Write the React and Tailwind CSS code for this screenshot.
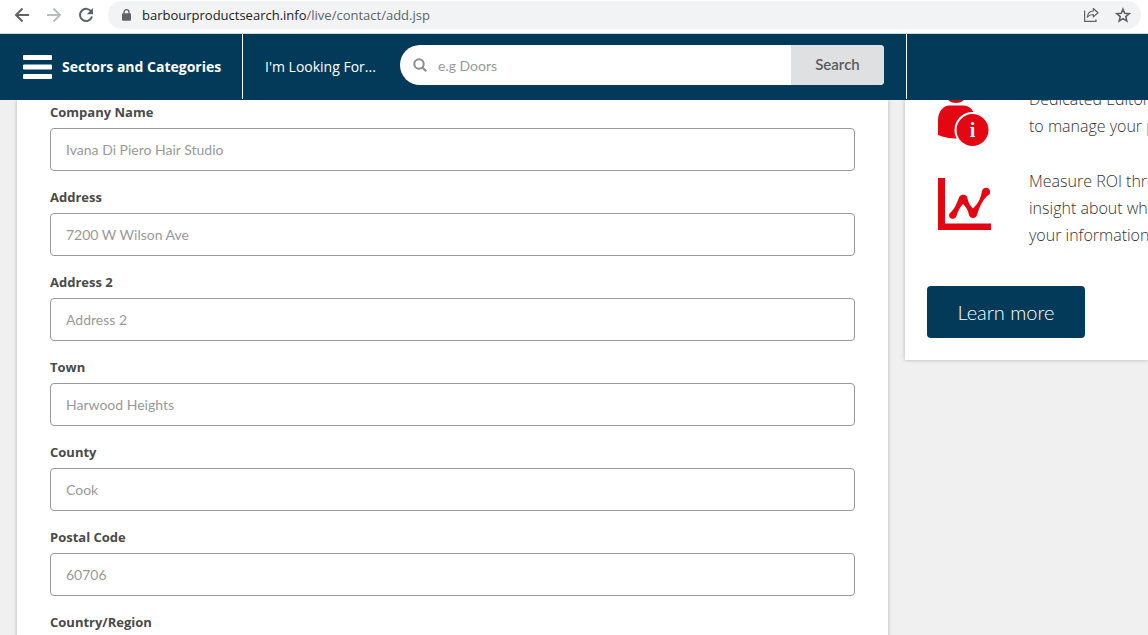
import { useState } from 'react';

const FIELDS = [
  { id: 'company', label: 'Company Name', placeholder: 'Ivana Di Piero Hair Studio' },
  { id: 'address', label: 'Address', placeholder: '7200 W Wilson Ave' },
  { id: 'address2', label: 'Address 2', placeholder: 'Address 2' },
  { id: 'town', label: 'Town', placeholder: 'Harwood Heights' },
  { id: 'county', label: 'County', placeholder: 'Cook' },
  { id: 'postcode', label: 'Postal Code', placeholder: '60706' },
  { id: 'country', label: 'Country/Region', placeholder: '' },
];

function BrowserBar() {
  return (
    <div className="flex h-[34px] items-start border-b border-[#c9dde3] bg-white pl-[14px] pr-[7px] pt-px">
      <div className="flex h-7 items-center gap-4 pr-[14px]">
        <button type="button" aria-label="Back">
          <svg width="16" height="16" viewBox="0 0 16 16" fill="none" stroke="#5f6368" strokeWidth="2">
            <path d="M15 8H2.5M8.5 1.5 2 8l6.5 6.5" />
          </svg>
        </button>
        <button type="button" aria-label="Forward">
          <svg width="16" height="16" viewBox="0 0 16 16" fill="none" stroke="#babcbe" strokeWidth="2">
            <path d="M1 8h12.5M7.5 1.5 14 8l-6.5 6.5" />
          </svg>
        </button>
        <button type="button" aria-label="Reload">
          <svg width="16" height="16" viewBox="0 0 16 16">
            <path d="M13.3 4.7A6.1 6.1 0 1 0 14 9.6" fill="none" stroke="#5f6368" strokeWidth="2" />
            <path d="M15 1v6.2H8.8z" fill="#5f6368" />
          </svg>
        </button>
      </div>
      <div className="flex h-7 flex-1 items-center rounded-full bg-[#f1f3f4] pl-[14px] pr-[10px]">
        <svg width="9" height="12" viewBox="0 0 9 12">
          <path d="M2 5V3.2a2.5 2.5 0 0 1 5 0V5" fill="none" stroke="#5f6368" strokeWidth="1.3" />
          <rect x="0" y="4.2" width="9" height="7.5" rx="1" fill="#5f6368" />
        </svg>
        <p className="flex-1 pl-[11px] font-['Open_Sans',sans-serif] text-[13px] leading-5 text-[#5f6368]">
          <span className="text-[#202124]">barbourproductsearch.info</span>/live/contact/add.jsp
        </p>
        <div className="flex items-center gap-4">
          <button type="button" aria-label="Share">
            <svg width="16" height="16" viewBox="0 0 16 16" fill="none" stroke="#5f6368" strokeWidth="1.2">
              <path d="M1.6 3.5v10.9h11.4v-2" />
              <path d="M10.300 1.500 15 5.700l-4.700 4.200V7.500C7.700 7.400 5.900 8.200 4.300 10.200 4.600 6.500 6.700 4.200 10.300 4z" strokeLinejoin="round" />
            </svg>
          </button>
          <button type="button" aria-label="Bookmark">
            <svg width="16" height="16" viewBox="0 0 16 16" fill="none" stroke="#5f6368" strokeWidth="1.6">
              <path d="m8 2.200 1.700 4.100 4.500.4-3.400 2.900 1 4.400L8 11.600l-3.800 2.400 1-4.400-3.400-2.900 4.500-.4z" />
            </svg>
          </button>
        </div>
      </div>
    </div>
  );
}

function SiteHeader() {
  return (
    <header className="relative z-10 flex h-[66px] bg-[#033a59] pb-px font-['Open_Sans',sans-serif] text-white">
      <button type="button" className="flex w-[243px] shrink-0 items-center gap-[10px] border-r border-white pl-[23px] text-[14px] font-bold">
        <svg width="29" height="24" viewBox="0 0 29 24" fill="currentColor">
          <rect width="29" height="5" rx="1" />
          <rect y="9.500" width="29" height="5" rx="1" />
          <rect y="19" width="29" height="5" rx="1" />
        </svg>
        Sectors and Categories
      </button>
      <form className="flex flex-1 items-start pl-[22px] pr-[22px] pt-[11px]" onSubmit={(e) => e.preventDefault()}>
        <label htmlFor="search" className="w-[135px] shrink-0 text-[14px] leading-[44px]">I'm Looking For...</label>
        <div className="flex h-10 flex-1 items-center overflow-hidden rounded-l-[20px] rounded-r-[4px] bg-white pl-[13px] font-['Lato',sans-serif]">
          <svg width="14" height="14" viewBox="0 0 14 14" fill="none" stroke="#8c8c8c" strokeWidth="2">
            <circle cx="6" cy="6" r="4.700" />
            <path d="m9.300 9.300 4 4" />
          </svg>
          <input id="search" type="text" placeholder="e.g Doors" className="h-10 min-w-0 flex-1 bg-transparent pl-[11px] text-[14px] text-[#444] placeholder:text-[#999] focus:outline-none" />
          <button type="submit" className="h-10 w-[93px] bg-[#dfe0e2] pb-[2px] text-[15px] font-semibold text-[#5b5b5b]">Search</button>
        </div>
      </form>
      <div className="w-[242px] shrink-0 border-l border-white" />
    </header>
  );
}

function EditorIcon() {
  return (
    <svg width="54" height="66" viewBox="0 0 54 66" className="shrink-0">
      <circle cx="18" cy="9" r="12" fill="#c4131f" />
      <path d="M0 38c0-9 6-14.500 11-14.500h14c7 0 12 6 13 14.500v17.500C25 58 10 57 0 53z" fill="#e30613" />
      <circle cx="34.500" cy="48" r="18" fill="#fff" />
      <circle cx="34.500" cy="48" r="16" fill="#e30613" />
      <text x="34.500" y="55" textAnchor="middle" fill="#fff" fontSize="20" fontWeight="700" fontFamily="Liberation Serif, serif">i</text>
    </svg>
  );
}

function ChartIcon() {
  return (
    <svg width="54" height="54" viewBox="0 0 54 54" className="shrink-0" fill="#e30613">
      <path d="M0 0h7v45.500h46V52H0z" />
      <path d="M11.500 35.500C16 32 18 27 21.500 18.500c1.500-2.500 6-2.500 7.500 0C30 24 32 28 35 30.500 40 26 43 20 44 13c1-4 7-4.500 8 0 .5 3-1 4-3 5-5 5-8 12-10 19-1 4-7 4-8 0-1-5-3-8-6-11-3 3-5 7-6.500 12-2 5-9 3-7-2.500z" />
    </svg>
  );
}

function Sidebar() {
  return (
    <aside className="-mt-8 w-[243px] shrink-0 self-start overflow-hidden bg-white pb-[22px] pl-[22px] pt-[14px] shadow-[0_0_4px_rgba(0,0,0,0.25)]">
      <ul className="whitespace-nowrap pl-[11px] font-['Open_Sans',sans-serif] text-[16px] font-light leading-[27px] text-[#333]">
        <li className="flex h-[82px] gap-[37px]">
          <EditorIcon />
          <p className="pt-[4px]">Dedicated Editor<br />to manage your profile</p>
        </li>
        <li className="flex gap-[37px]">
          <div className="pt-[14px]"><ChartIcon /></div>
          <p className="pt-[4px]">Measure ROI through<br />insight about who<br />your information</p>
        </li>
      </ul>
      <a href="#learn" className="mt-[37px] flex h-[52px] w-[158px] items-center justify-center rounded bg-[#033a59] font-['Lato',sans-serif] text-[20px] font-light text-white">
        Learn more
      </a>
    </aside>
  );
}

export default function App() {
  const [values, setValues] = useState({});

  const handleChange = (e) => {
    setValues(prev => ({ ...prev, [e.target.name]: e.target.value }));
  };

  return (
    <div className="flex h-screen flex-col overflow-hidden bg-[#f0f0f0]">
      <BrowserBar />
      <SiteHeader />
      <main className="flex min-h-0 flex-1 gap-[17px] pl-[17px]">
        <form className="h-max flex-1 bg-white px-[33px] pt-[2px] shadow-[0_0_4px_rgba(0,0,0,0.25)]">
          {FIELDS.map(field => (
            <div key={field.id} className="pb-4">
              <label htmlFor={field.id} className="mb-[6px] block font-['Open_Sans',sans-serif] text-[13px] font-bold leading-5 text-[#4a4a4a]">
                {field.label}
              </label>
              <input
                id={field.id}
                name={field.id}
                type="text"
                placeholder={field.placeholder}
                value={values[field.id] || ''}
                onChange={handleChange}
                className="block h-[43px] w-full rounded border border-[#999] bg-white px-[15px] font-['Lato',sans-serif] text-[14px] text-[#444] placeholder:text-[#999] focus:outline-none"
              />
            </div>
          ))}
        </form>
        <Sidebar />
      </main>
    </div>
  );
}
